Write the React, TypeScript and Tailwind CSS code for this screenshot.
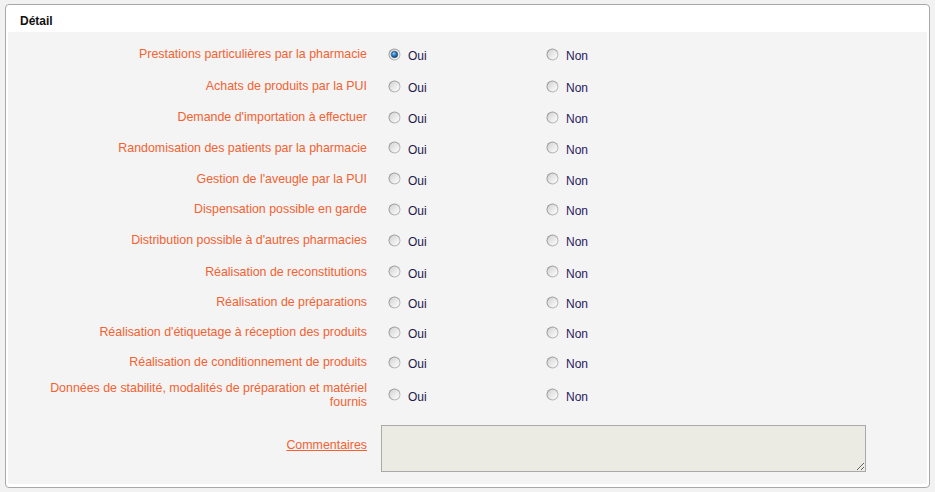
import { useState } from 'react'

type Row = {
  label: string
  height: string
}

const rows: Row[] = [
  { label: 'Prestations particulières par la pharmacie', height: 'h-[32px]' },
  { label: 'Achats de produits par la PUI', height: 'h-[32px]' },
  { label: "Demande d'importation à effectuer", height: 'h-[30px]' },
  { label: 'Randomisation des patients par la pharmacie', height: 'h-[31px]' },
  { label: "Gestion de l'aveugle par la PUI", height: 'h-[31px]' },
  { label: 'Dispensation possible en garde', height: 'h-[30px]' },
  { label: "Distribution possible à d'autres pharmacies", height: 'h-[32px]' },
  { label: 'Réalisation de reconstitutions', height: 'h-[31px]' },
  { label: 'Réalisation de préparations', height: 'h-[30px]' },
  { label: "Réalisation d'étiquetage à réception des produits", height: 'h-[30px]' },
  { label: 'Réalisation de conditionnement de produits', height: 'h-[30px]' },
  { label: 'Données de stabilité, modalités de préparation et matériel fournis', height: 'h-[32px] pt-[3px]' },
]

function Radio({ checked }: { checked: boolean }) {
  return (
    <svg width="13" height="13" viewBox="0 0 13 13" className="shrink-0">
      <defs>
        <linearGradient id="ring" x1="0" y1="0" x2="1" y2="1">
          <stop offset="0" stopColor="#8c8c8c" />
          <stop offset="1" stopColor="#c4c4c4" />
        </linearGradient>
        <linearGradient id="face" x1="0" y1="0" x2="1" y2="1">
          <stop offset="0" stopColor="#d2d2d2" />
          <stop offset="1" stopColor="#ffffff" />
        </linearGradient>
        <radialGradient id="dot" cx="0.4" cy="0.35" r="0.7">
          <stop offset="0" stopColor="#8fd0ff" />
          <stop offset="0.45" stopColor="#2b82c8" />
          <stop offset="1" stopColor="#0a3d6e" />
        </radialGradient>
      </defs>
      <circle cx="6.5" cy="6.5" r="6" fill="url(#ring)" />
      <circle cx="6.5" cy="6.5" r="5" fill="url(#face)" />
      {checked ? <circle cx="6.5" cy="6.5" r="3.2" fill="url(#dot)" stroke="#1d3f63" strokeWidth="0.6" /> : null}
    </svg>
  )
}

export default function App() {
  const [values] = useState<Record<number, 'oui' | 'non'>>({ 0: 'oui' })

  return (
    <div className="min-h-[492px] bg-[#f2f2f2] px-[5px] pt-[4px] pb-[4px] font-['Liberation_Sans',Arial,sans-serif] text-[12px] leading-[14px]">
      <div className="rounded-[4px] border border-[#a8a8a8] bg-white">
        <div className="flex h-[27px] items-center pl-[14px] pt-[4px] font-bold text-[#111]">Détail</div>
        <div className="mx-[2px] mb-[3px] bg-[#f4f4f4] pt-[6px] pb-[12px]">
          {rows.map((row, index) => (
            <div key={row.label} className={`flex items-center ${row.height}`}>
              <div className="w-[359px] pl-[30px] text-right text-[12.4px] text-[#f26232]">{row.label}</div>
              <div className="ml-[21px] flex w-[158px] items-center gap-[7px]">
                <Radio checked={values[index] === 'oui'} />
                <span className="pt-[4px] text-[#1e1a4a]">Oui</span>
              </div>
              <div className="flex items-center gap-[7px]">
                <Radio checked={values[index] === 'non'} />
                <span className="pt-[4px] text-[#2a1a5c]">Non</span>
              </div>
            </div>
          ))}
          <div className="mt-[16px] flex items-start">
            <div className="mt-[13px] w-[359px] text-right text-[12.4px]">
              <a href="#" className="text-[#f26232] underline">Commentaires</a>
            </div>
            <textarea className="ml-[14px] h-[47px] w-[485px] border border-[#a9a9a9] bg-[#ebebe4] outline-none" />
          </div>
        </div>
      </div>
    </div>
  )
}
